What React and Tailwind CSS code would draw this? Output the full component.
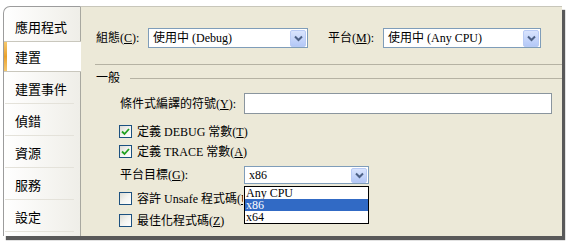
import React from "react";

const F = "font-['Liberation_Serif','Noto_Sans_CJK_TC',serif]";

function DropBtn({ h = 18 }) {
  return (
    <div
      className="w-[16px] flex items-center justify-center rounded-[2px] border border-[#b9cbf5] bg-gradient-to-b from-[#d9e4fd] to-[#b4c8f7]"
      style={{ height: h }}
    >
      <svg width="9" height="7" viewBox="0 0 9 7">
        <path d="M1 1.5 L4.5 5 L8 1.5" fill="none" stroke="#4d6185" strokeWidth="2" />
      </svg>
    </div>
  );
}

function Combo({ w, text, h = 20 }) {
  return (
    <div
      className="flex items-center justify-between border border-[#7f9db9] bg-white pl-[4px] pr-[1px]"
      style={{ width: w, height: h }}
    >
      <span className={`${F} text-[12px] leading-none text-black whitespace-nowrap`}>{text}</span>
      <DropBtn h={h - 3} />
    </div>
  );
}

function Check({ checked }) {
  return (
    <div className="w-[13px] h-[13px] shrink-0 border border-[#1c5180] bg-gradient-to-br from-[#dcdcd5] via-[#f4f4f0] to-white flex items-center justify-center">
      {checked && (
        <svg width="9" height="9" viewBox="0 0 9 9">
          <path d="M1 4.5 L3.5 7 L8 2" fill="none" stroke="#21a121" strokeWidth="1.8" />
        </svg>
      )}
    </div>
  );
}

export default function App() {
  const items = ["應用程式", "建置", "建置事件", "偵錯", "資源", "服務", "設定"];
  return (
    <div className={`w-[566px] h-[241px] bg-white overflow-hidden ${F} text-[12px] text-black`}>
      <div className="ml-[3px] mt-[6px] w-[559px] h-[230px] flex shadow-[3px_4px_1px_rgba(60,60,60,0.85)]">
        {/* sidebar */}
        <div className="w-[78px] h-full rounded-tl-[7px] border-l border-t border-[#9c9c9c] border-r border-r-[#a8a8a0] bg-gradient-to-r from-white to-[#efeee8] pt-[4px] flex flex-col">
          {items.map((t, i) => (
            <div key={t} className="relative">
              {i === 1 ? (
                <div className="h-[31px] -mr-[1px] bg-white border-y border-[#c9c7bd] flex items-center pl-[11px] relative">
                  <div className="absolute left-0 top-0 bottom-0 w-[3px] bg-gradient-to-b from-[#f6c86b] via-[#e9a12a] to-[#f6c86b]" />
                  <span className="text-[13px] font-['Noto_Sans_CJK_TC',sans-serif] leading-none">{t}</span>
                </div>
              ) : (
                <div className={`${i === 0 ? "h-[30px]" : "h-[32px]"} flex items-center pl-[11px]`}>
                  <span className="text-[13px] font-['Noto_Sans_CJK_TC',sans-serif] leading-none">{t}</span>
                </div>
              )}
              {i > 1 && i < 7 && (
                <div className="absolute left-[1px] right-[6px] bottom-0 h-px bg-[#e4e2da]" />
              )}
            </div>
          ))}
        </div>

        {/* main */}
        <div className="relative flex-1 h-full bg-[#ece9d8] border-t border-[#c8c6ba] flex flex-col">
          {/* row 1 */}
          <div className="mt-[21px] flex items-center pl-[15px]">
            <span className="w-[52px] whitespace-nowrap">組態(<u>C</u>):</span>
            <Combo w={160} text="使用中 (Debug)" />
            <span className="ml-[20px] w-[55px] whitespace-nowrap">平台(<u>M</u>):</span>
            <Combo w={158} text="使用中 (Any CPU)" />
          </div>
          <div className="mt-[16px] ml-[14px] h-px bg-[#b5b2a3]" />
          {/* section header */}
          <div className="mt-[5px] ml-[15px] flex items-center h-[16px]">
            <span className="whitespace-nowrap">一般</span>
            <div className="ml-[10px] flex-1 h-px bg-[#b5b2a3]" />
          </div>
          {/* symbols */}
          <div className="mt-[7px] ml-[39px] flex items-center">
            <span className="w-[124px] whitespace-nowrap">條件式編譯的符號(<u>Y</u>):</span>
            <div className="w-[308px] h-[21px] bg-white border border-[#8a959e]" />
          </div>
          <div className="mt-[11px] ml-[38px] flex items-center gap-[5px] h-[13px]">
            <Check checked />
            <span className="whitespace-nowrap">定義 DEBUG 常數(<u>T</u>)</span>
          </div>
          <div className="mt-[7px] ml-[38px] flex items-center gap-[5px] h-[13px]">
            <Check checked />
            <span className="whitespace-nowrap">定義 TRACE 常數(<u>A</u>)</span>
          </div>
          <div className="mt-[8px] ml-[39px] flex items-center">
            <span className="w-[124px] whitespace-nowrap">平台目標(<u>G</u>):</span>
            <Combo w={125} h={18} text="x86" />
          </div>
          <div className="mt-[8px] ml-[38px] flex items-center gap-[5px] h-[13px]">
            <Check />
            <span className="whitespace-nowrap w-[106px] overflow-hidden">容許 Unsafe 程式碼(<u>U</u>)</span>
          </div>
          <div className="mt-[9px] ml-[38px] flex items-center gap-[5px] h-[13px]">
            <Check />
            <span className="whitespace-nowrap">最佳化程式碼(<u>Z</u>)</span>
          </div>

          {/* dropdown list */}
          <div className="absolute left-[163px] top-[179px] w-[125px] border border-black bg-white flex flex-col">
            <div className="h-[12px] leading-[12px] pl-[1px] text-[12px] overflow-hidden">Any CPU</div>
            <div className="h-[12px] leading-[12px] pl-[1px] text-[12px] overflow-hidden bg-[#316ac5] text-white">x86</div>
            <div className="h-[12px] leading-[12px] pl-[1px] text-[12px] overflow-hidden">x64</div>
          </div>
        </div>
      </div>
    </div>
  );
}
